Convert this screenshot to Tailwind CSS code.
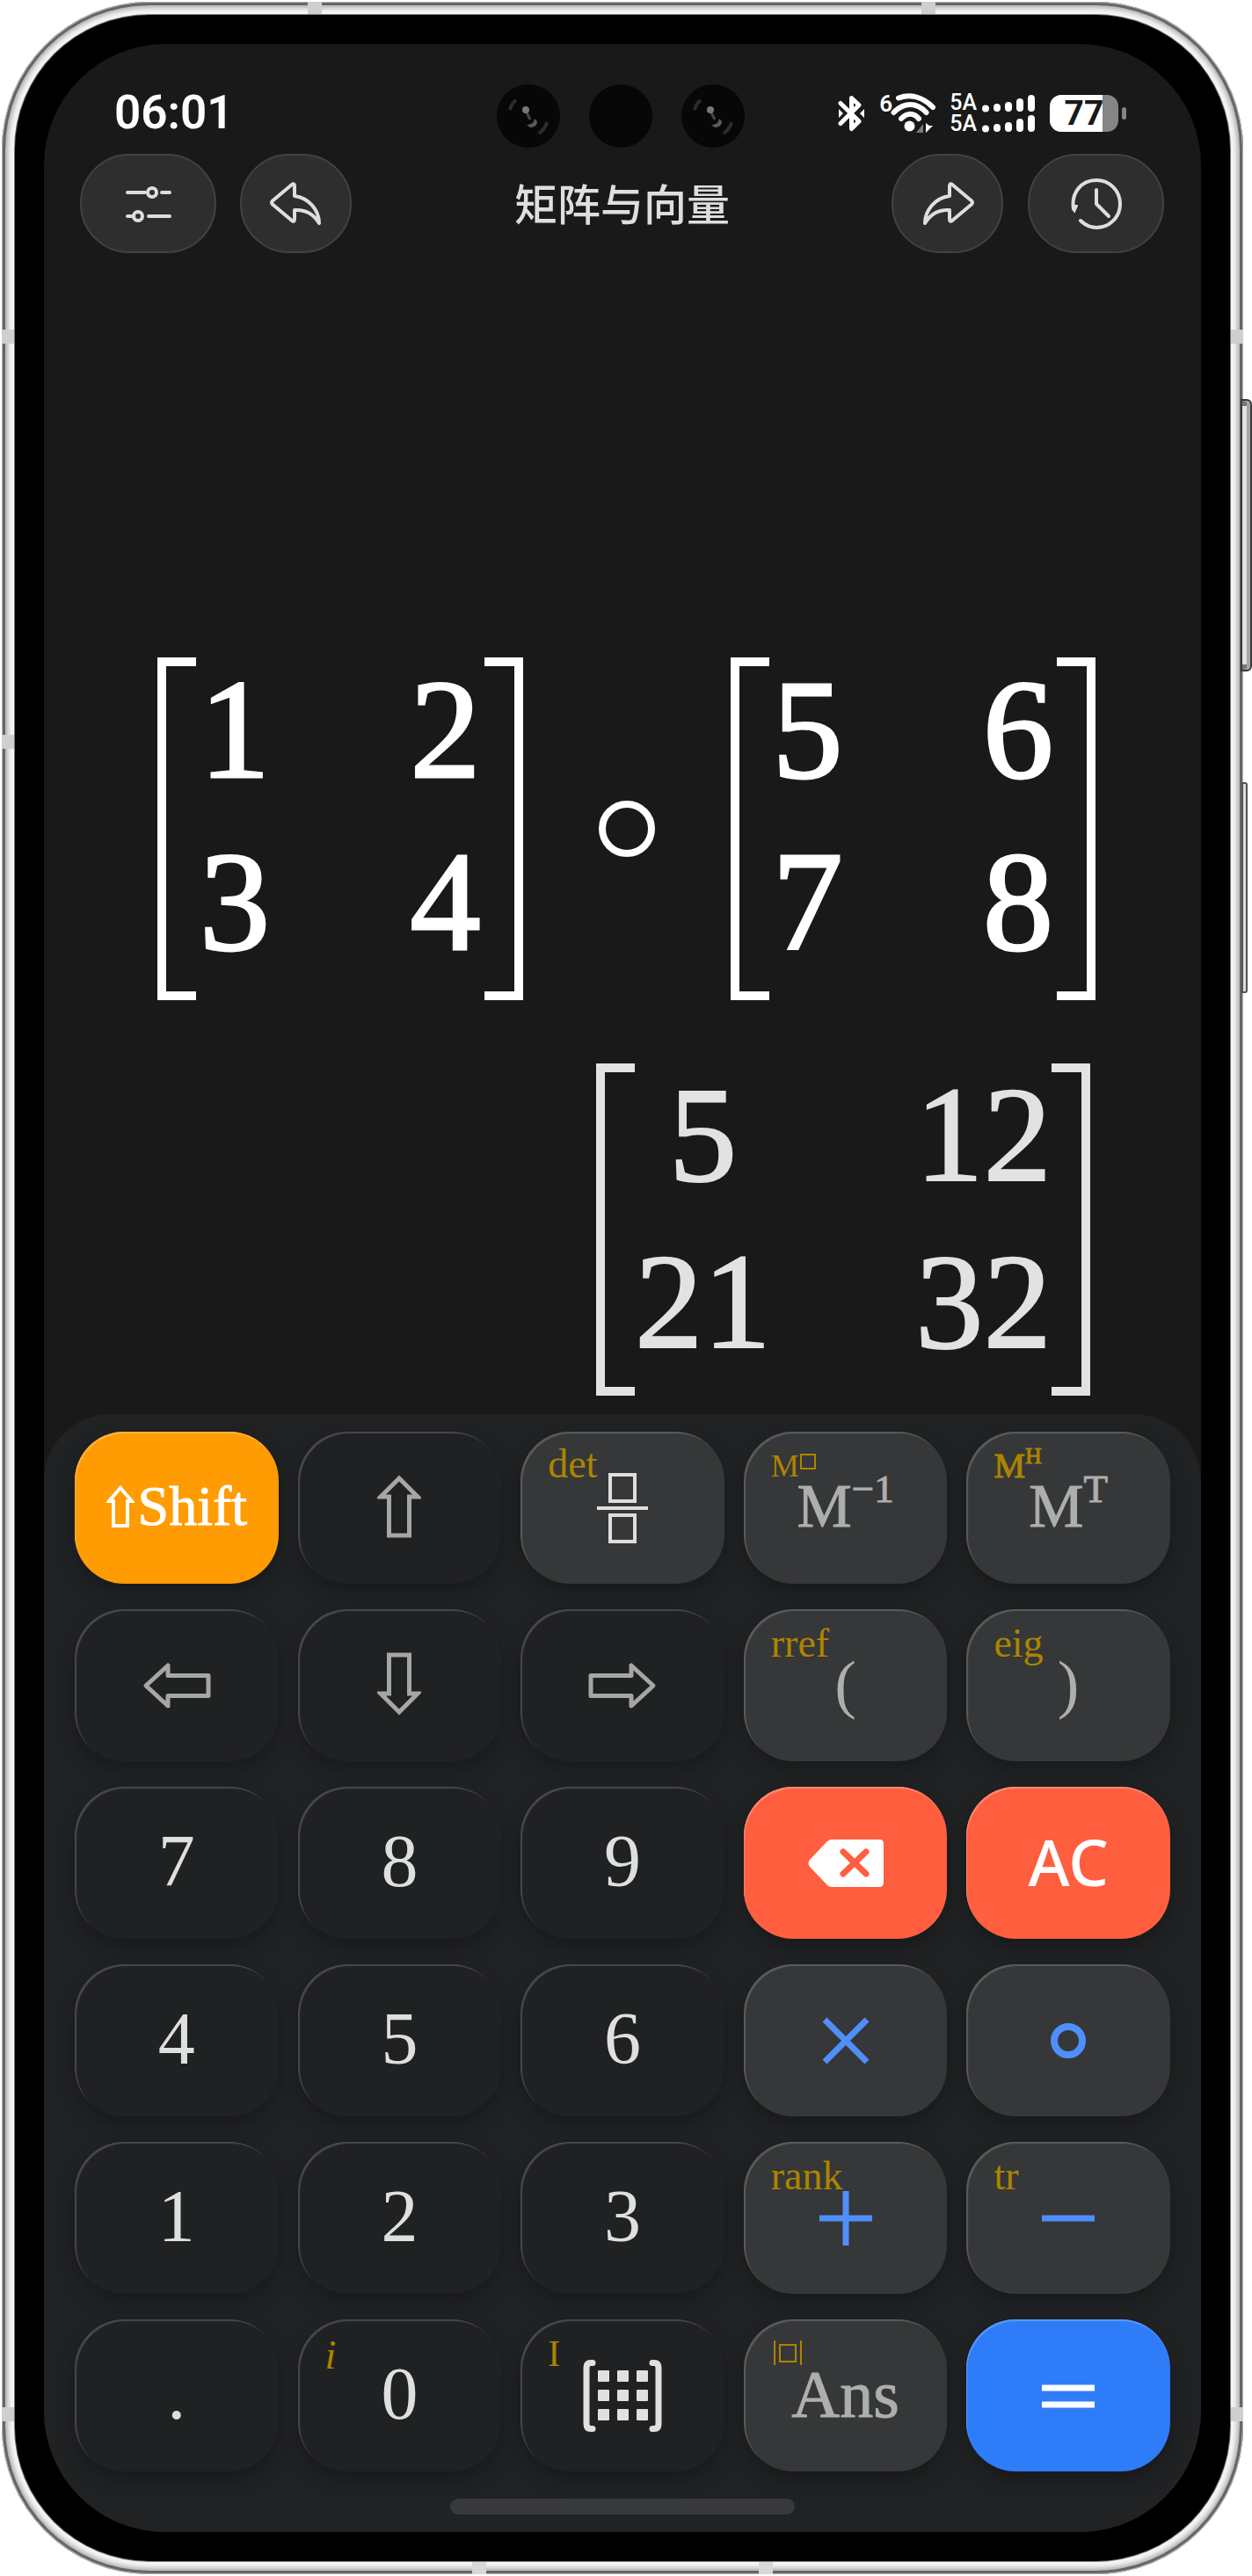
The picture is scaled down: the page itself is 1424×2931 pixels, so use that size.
<!DOCTYPE html>
<html lang="zh-CN">
<head>
    <meta charset="UTF-8">
    <meta name="viewport" content="width=device-width, initial-scale=1.0">
    <title>矩阵与向量</title>
    <script src="https://cdn.jsdelivr.net/npm/@tailwindcss/browser@4"></script>
</head>
<body class="bg-white">
    <!-- Phone frame -->
    <div class="relative ml-[2px] mr-[10px] mt-[2px] rounded-[168px] bg-[#f4f4f4] p-[15px] shadow-[inset_0_0_0_1px_#b5b5b5,inset_0_0_0_4px_#666666,inset_0_0_5px_7px_#b0b0b0]">
        <!-- Antenna bands -->
        <div class="absolute left-[348px] top-0 h-4 w-4 bg-[#cfcfcf]"></div>
        <div class="absolute right-[350px] top-0 h-4 w-4 bg-[#cfcfcf]"></div>
        <div class="absolute bottom-0 left-[535px] h-4 w-4 bg-[#d8d8d8]"></div>
        <div class="absolute bottom-0 right-[535px] h-4 w-4 bg-[#d8d8d8]"></div>
        <div class="absolute left-0 top-[373px] h-4 w-4 bg-[#cfcfcf]"></div>
        <div class="absolute right-0 top-[373px] h-4 w-4 bg-[#cfcfcf]"></div>
        <div class="absolute left-0 top-[834px] h-4 w-4 bg-[#cfcfcf]"></div>
        <div class="absolute bottom-[174px] left-0 h-4 w-4 bg-[#cfcfcf]"></div>
        <div class="absolute bottom-[174px] right-0 h-4 w-4 bg-[#cfcfcf]"></div>
        <!-- Side buttons -->
        <div class="absolute -right-[10px] top-[452px] h-[310px] w-[13px] rounded-r-[6px] border-2 border-[#3a3a3a] bg-[#e2e2e2] shadow-[inset_-4px_0_0_#a5a5a5,inset_0_7px_0_-1px_#777777,inset_0_-7px_0_-1px_#777777]"></div>
        <div class="absolute -right-[5px] top-[888px] h-[240px] w-[7px] rounded-r-[3px] border-2 border-[#555555] bg-[#dddddd]"></div>

        <div class="relative rounded-[153px] bg-black p-[33px] shadow-[0_0_0_1px_#777777]">
            <main class="overflow-hidden rounded-[138px] bg-[#191919]">
                <!-- Status bar -->
                <div class="grid grid-cols-[1fr_auto_1fr] items-start pt-[46px] pl-[80px] pr-[85px] text-white">
                    <time class="font-[Roboto,sans-serif] text-[53px] leading-[64px] font-semibold">06:01</time>
                    <div class="flex gap-[33px]">
                        <svg class="size-[72px]" viewBox="0 0 72 72" fill="none">
                            <circle cx="36" cy="36" r="36" fill="#070707"/>
                            <path d="M15 29c1-5 3-8 7-11M57 43c-1 5-4 9-9 13" stroke="#2c2c2c" stroke-width="4"/>
                            <path d="M33 30l5 10" stroke="#444" stroke-width="3"/>
                            <circle cx="33" cy="29" r="4" fill="#777"/>
                            <path d="M34 46c5 0 8-2 9-7l3 3c0 5-4 7-8 7z" fill="#5a5a5a"/>
                        </svg>
                        <svg class="size-[72px]" viewBox="0 0 72 72"><circle cx="36" cy="36" r="36" fill="#070707"/></svg>
                        <svg class="size-[72px]" viewBox="0 0 72 72" fill="none">
                            <circle cx="36" cy="36" r="36" fill="#070707"/>
                            <path d="M15 29c1-5 3-8 7-11M57 43c-1 5-4 9-9 13" stroke="#2c2c2c" stroke-width="4"/>
                            <path d="M33 30l5 10" stroke="#444" stroke-width="3"/>
                            <circle cx="33" cy="29" r="4" fill="#777"/>
                            <path d="M34 46c5 0 8-2 9-7l3 3c0 5-4 7-8 7z" fill="#5a5a5a"/>
                        </svg>
                    </div>
                    <div class="flex h-[66px] items-center justify-end font-[Roboto,sans-serif]">
                        <svg class="mr-[16px] h-[44px] w-[31px]" viewBox="0 0 31 44" fill="none">
                            <path d="M3 10.500 24 31 15.500 39.500V4.500L24 12.500 3 33.500" stroke="#fff" stroke-width="5" stroke-linejoin="round" stroke-linecap="round"/>
                            <path d="M1 17l5 5-5 5zM30 17l-5 5 5 5z" fill="#fff"/>
                        </svg>
                        <span class="-mr-[2px] self-start pt-[8px] text-[26px] leading-[28px] font-semibold">6</span>
                        <svg class="mr-[15px] h-[46px] w-[52px]" viewBox="0 0 52 46" fill="none">
                            <path d="M9 5.500c14-5 28-1 39 10.500M3.500 22c12-12 26-12 37 0M12 29c7-7 14-7 20 0" stroke="#fff" stroke-width="6" stroke-linecap="round"/>
                            <circle cx="21.500" cy="37.500" r="6" fill="#fff"/>
                            <path d="M37 35v10H29z" fill="#777"/>
                            <path d="M40 34v11l8-8h-4z" fill="#fff"/>
                        </svg>
                        <div class="mr-[6px] flex flex-col text-[25px] leading-[24px] font-medium">
                            <span>5A</span>
                            <span>5A</span>
                        </div>
                        <svg class="mr-[17px] h-[43px] w-[60px]" viewBox="0 0 60 43" stroke="#fff" stroke-width="8" stroke-linecap="round">
                            <path d="M4 15.500v.1M17 14v1M30 12v3M43 8v7M56 4v11M4 38.500v.1M17 37v1M30 35v3M43 31v7M56 27v11"/>
                        </svg>
                        <div class="flex h-[42px] w-[78px] items-center justify-center rounded-[13px] bg-linear-to-r from-white from-77% to-[#858585] to-77% text-[39px] leading-none font-bold text-[#191919]">77</div>
                        <div class="ml-1 h-[14px] w-[5px] rounded-full bg-[#858585]"></div>
                    </div>
                </div>

                <!-- Toolbar -->
                <header class="mt-[7px] flex items-center pl-[41px] pr-[42px]">
                    <div class="flex flex-1 gap-[27px]">
                        <button type="button" aria-label="设置" class="flex h-[113px] w-[155px] items-center justify-center rounded-[56px] border-2 border-[#424242] bg-[#2e2e2e]">
                            <svg class="h-[48px] w-[54px]" viewBox="0 0 54 48" fill="none" stroke="#dedede" stroke-width="4" stroke-linecap="round">
                                <path d="M3 11h20M42 11h9M3 38h5M27 38h24"/>
                                <circle cx="31" cy="11" r="5"/>
                                <circle cx="15" cy="38" r="5"/>
                            </svg>
                        </button>
                        <button type="button" aria-label="撤销" class="flex h-[113px] w-[127px] items-center justify-center rounded-[56px] border-2 border-[#424242] bg-[#2e2e2e]">
                            <svg class="h-[50px] w-[60px]" viewBox="0 0 60 50" fill="none" stroke="#dedede" stroke-width="4" stroke-linejoin="round">
                                <path d="M25 3 3 21.500q-2 2 0 4L25 44q3 2 3-2V32c14-1 22 5 28 15 0-15-12-29-28-31V5q0-4-3-2z"/>
                            </svg>
                        </button>
                    </div>
                    <h1 class="pb-1 font-['Noto_Sans_CJK_SC',sans-serif] text-[49px] leading-[60px] font-medium text-[#dedede]">矩阵与向量</h1>
                    <div class="flex flex-1 justify-end gap-[28px]">
                        <button type="button" aria-label="重做" class="flex h-[113px] w-[127px] items-center justify-center rounded-[56px] border-2 border-[#424242] bg-[#2e2e2e]">
                            <svg class="h-[50px] w-[60px]" viewBox="0 0 60 50" fill="none" stroke="#dedede" stroke-width="4" stroke-linejoin="round">
                                <path d="M35 3 57 21.500q2 2 0 4L35 44q-3 2-3-2V32C18 31 10 37 4 47 4 32 16 18 32 16V5q0-4 3-2z"/>
                            </svg>
                        </button>
                        <button type="button" aria-label="历史" class="flex h-[113px] w-[155px] items-center justify-center rounded-[56px] border-2 border-[#424242] bg-[#2e2e2e]">
                            <svg class="h-[60px] w-[60px]" viewBox="0 0 60 60" fill="none" stroke="#dedede" stroke-width="4" stroke-linecap="round" stroke-linejoin="round">
                                <path d="M4 36C1 17 13 3 30 3c15 0 27 12 27 27S45 57 30 57c-7 0-13-3-18-8"/>
                                <path d="M30 14v16l14 14"/>
                                <path d="M3 32h5l-3 7z" fill="#dedede" stroke-width="2"/>
                            </svg>
                        </button>
                    </div>
                </header>

                <!-- Display -->
                <section class="flex flex-col items-end pt-[460px] pb-[21px] font-['Liberation_Serif',serif]">
                    <div class="grid w-full grid-cols-[1fr_auto_1fr] items-center gap-[86px] pl-[129px] pr-[120px] text-[160px] leading-[164px] text-white [-webkit-text-stroke:3px_#ffffff]">
                        <div class="flex h-[390px]">
                            <div class="w-[44px] border-y-[10px] border-l-[10px] border-white"></div>
                            <div class="flex flex-1 justify-between px-1 text-center">
                                <div class="flex flex-col gap-8"><span>1</span><span>3</span></div>
                                <div class="flex flex-col gap-8"><span>2</span><span>4</span></div>
                            </div>
                            <div class="w-[44px] border-y-[10px] border-r-[10px] border-white"></div>
                        </div>
                        <div class="size-16 rounded-full border-8 border-white"></div>
                        <div class="flex h-[390px]">
                            <div class="w-[44px] border-y-[10px] border-l-[10px] border-white"></div>
                            <div class="flex flex-1 justify-between px-1 text-center">
                                <div class="flex flex-col gap-8"><span>5</span><span>7</span></div>
                                <div class="flex flex-col gap-8"><span>6</span><span>8</span></div>
                            </div>
                            <div class="w-[44px] border-y-[10px] border-r-[10px] border-white"></div>
                        </div>
                    </div>
                    <output class="mt-[72px] mr-[126px] flex h-[378px] w-[562px] text-[155px] leading-[162px] text-[#e2e2e2] [-webkit-text-stroke:2px_#e2e2e2]">
                        <span class="w-[44px] border-y-[10px] border-l-[10px] border-[#e2e2e2]"></span>
                        <span class="flex flex-1 justify-between text-center">
                            <span class="flex flex-col gap-7"><span>5</span><span>21</span></span>
                            <span class="flex flex-col gap-7"><span>12</span><span>32</span></span>
                        </span>
                        <span class="w-[44px] border-y-[10px] border-r-[10px] border-[#e2e2e2]"></span>
                    </output>
                </section>

                <!-- Keypad -->
                <section class="rounded-t-[76px] bg-[#202224] px-[35px] pt-[20px] pb-[20px] font-['Liberation_Serif',serif]">
                    <div class="grid grid-cols-5 gap-x-[22px] gap-y-[29px]">
                        <button type="button" class="flex h-[173px] items-center justify-center gap-1 rounded-[56px] bg-[#ff9c03] pb-1 text-[64px] leading-none text-white shadow-[inset_1px_2px_1px_#ffb443,0_10px_22px_#00000044] [-webkit-text-stroke:1px_#ffffff]">
                            <svg class="h-[48px] w-[32px]" viewBox="0 0 32 48" fill="none" stroke="#fff" stroke-width="4"><path d="M16 3 29 18H24V46H8V18H3z"/></svg>
                            <span>Shift</span>
                        </button>
                        <button type="button" aria-label="上" class="flex h-[173px] items-center justify-center rounded-[56px] bg-[#202123] pb-1 shadow-[inset_2px_2px_1px_#48494b,0_10px_22px_#00000044]">
                            <svg class="h-[72px] w-[50px]" viewBox="0 0 50 72" fill="none" stroke="#a5a6a6" stroke-width="5"><path d="M25 4 46 25H36.500V69H13.500V25H4z"/></svg>
                        </button>
                        <button type="button" aria-label="分数 det" class="relative flex h-[173px] items-center justify-center rounded-[56px] bg-[#363738] shadow-[inset_2px_2px_1px_#5a5b5c,0_10px_22px_#00000044]">
                            <span class="absolute left-[31px] top-[14px] text-[46px] leading-[46px] text-[#ad8400]">det</span>
                            <svg class="h-[80px] w-[60px]" viewBox="0 0 60 80" fill="none" stroke="#dedede" stroke-width="4"><path d="M16 2H44V32H16zM16 48H44V78H16zM1 40H59"/></svg>
                        </button>
                        <button type="button" class="relative flex h-[173px] items-center justify-center rounded-[56px] bg-[#363738] pb-1 text-[70px] leading-none text-[#adaeae] shadow-[inset_2px_2px_1px_#5a5b5c,0_10px_22px_#00000044]">
                            <span class="absolute left-[31px] top-[16px] flex text-[36px] leading-[46px] text-[#ad8400]">M<svg class="mt-[8px] h-[20px] w-[20px]" viewBox="0 0 20 20" fill="none" stroke="#ad8400" stroke-width="2"><path d="M2 2H18V18H2z"/></svg></span>
                            <span class="[-webkit-text-stroke:1px_#adaeae]">M<sup class="-top-7 text-[45px]">−1</sup></span>
                        </button>
                        <button type="button" class="relative flex h-[173px] items-center justify-center rounded-[56px] bg-[#363738] pb-1 text-[70px] leading-none text-[#adaeae] shadow-[inset_2px_2px_1px_#5a5b5c,0_10px_22px_#00000044]">
                            <span class="absolute left-[31px] top-[16px] text-[40px] leading-[46px] text-[#ad8400] [-webkit-text-stroke:1px_#ad8400]">M<sup class="-top-4 text-[26px]">H</sup></span>
                            <span class="[-webkit-text-stroke:1px_#adaeae]">M<sup class="-top-7 text-[45px]">T</sup></span>
                        </button>

                        <button type="button" aria-label="左" class="flex h-[173px] items-center justify-center rounded-[56px] bg-[#202123] shadow-[inset_2px_2px_1px_#48494b,0_10px_22px_#00000044]">
                            <svg class="h-[54px] w-[78px]" viewBox="0 0 78 54" fill="none" stroke="#a5a6a6" stroke-width="5" stroke-linejoin="round"><path d="M4 27 29 4V15.500H75V38.500H29V50z"/></svg>
                        </button>
                        <button type="button" aria-label="下" class="flex h-[173px] items-center justify-center rounded-[56px] bg-[#202123] pb-1 shadow-[inset_2px_2px_1px_#48494b,0_10px_22px_#00000044]">
                            <svg class="h-[72px] w-[50px]" viewBox="0 0 50 72" fill="none" stroke="#a5a6a6" stroke-width="5"><path d="M25 68 46 47H36.500V3H13.500V47H4z"/></svg>
                        </button>
                        <button type="button" aria-label="右" class="flex h-[173px] items-center justify-center rounded-[56px] bg-[#202123] shadow-[inset_2px_2px_1px_#48494b,0_10px_22px_#00000044]">
                            <svg class="h-[54px] w-[78px]" viewBox="0 0 78 54" fill="none" stroke="#a5a6a6" stroke-width="5" stroke-linejoin="round"><path d="M74 27 49 4V15.500H3V38.500H49V50z"/></svg>
                        </button>
                        <button type="button" class="relative flex h-[173px] items-center justify-center rounded-[56px] bg-[#363738] pb-1 text-[74px] leading-none text-[#adaeae] shadow-[inset_2px_2px_1px_#5a5b5c,0_10px_22px_#00000044]">
                            <span class="absolute left-[31px] top-[16px] text-[46px] leading-[46px] text-[#ad8400]">rref</span>
                            <span>(</span>
                        </button>
                        <button type="button" class="relative flex h-[173px] items-center justify-center rounded-[56px] bg-[#363738] pb-1 text-[74px] leading-none text-[#adaeae] shadow-[inset_2px_2px_1px_#5a5b5c,0_10px_22px_#00000044]">
                            <span class="absolute left-[31px] top-[16px] text-[46px] leading-[46px] text-[#ad8400]">eig</span>
                            <span>)</span>
                        </button>

                        <button type="button" class="h-[173px] rounded-[56px] bg-[#202123] pb-1 text-[84px] leading-none text-[#dedfdf] shadow-[inset_2px_2px_1px_#48494b,0_10px_22px_#00000044]">7</button>
                        <button type="button" class="h-[173px] rounded-[56px] bg-[#202123] pb-1 text-[84px] leading-none text-[#dedfdf] shadow-[inset_2px_2px_1px_#48494b,0_10px_22px_#00000044]">8</button>
                        <button type="button" class="h-[173px] rounded-[56px] bg-[#202123] pb-1 text-[84px] leading-none text-[#dedfdf] shadow-[inset_2px_2px_1px_#48494b,0_10px_22px_#00000044]">9</button>
                        <button type="button" aria-label="退格" class="flex h-[173px] items-center justify-center rounded-[56px] bg-[#ff5e3f] shadow-[inset_1px_2px_1px_#ff8a74,0_10px_22px_#00000044]">
                            <svg class="h-[54px] w-[86px]" viewBox="0 0 86 54">
                                <path d="M27 0H81q5 0 5 5V49q0 5-5 5H27q-3 0-5-2L2 31q-3-4 0-8L22 2q2-2 5-2z" fill="#fff"/>
                                <path d="M40 14 66 39M66 14 40 39" stroke="#ff5e3f" stroke-width="7" stroke-linecap="round"/>
                            </svg>
                        </button>
                        <button type="button" class="h-[173px] rounded-[56px] bg-[#ff5e3f] pb-1 font-['Noto_Sans',sans-serif] text-[72px] leading-none font-medium text-white shadow-[inset_1px_2px_1px_#ff8a74,0_10px_22px_#00000044]">AC</button>

                        <button type="button" class="h-[173px] rounded-[56px] bg-[#202123] pb-1 text-[84px] leading-none text-[#dedfdf] shadow-[inset_2px_2px_1px_#48494b,0_10px_22px_#00000044]">4</button>
                        <button type="button" class="h-[173px] rounded-[56px] bg-[#202123] pb-1 text-[84px] leading-none text-[#dedfdf] shadow-[inset_2px_2px_1px_#48494b,0_10px_22px_#00000044]">5</button>
                        <button type="button" class="h-[173px] rounded-[56px] bg-[#202123] pb-1 text-[84px] leading-none text-[#dedfdf] shadow-[inset_2px_2px_1px_#48494b,0_10px_22px_#00000044]">6</button>
                        <button type="button" aria-label="乘" class="flex h-[173px] items-center justify-center rounded-[56px] bg-[#363738] shadow-[inset_2px_2px_1px_#5a5b5c,0_10px_22px_#00000044]">
                            <svg class="h-[54px] w-[54px]" viewBox="0 0 54 54" stroke="#4f8ffb" stroke-width="7"><path d="M3 3 51 51M51 3 3 51"/></svg>
                        </button>
                        <button type="button" aria-label="哈达玛积" class="flex h-[173px] items-center justify-center rounded-[56px] bg-[#363738] shadow-[inset_2px_2px_1px_#5a5b5c,0_10px_22px_#00000044]">
                            <svg class="h-[40px] w-[40px]" viewBox="0 0 40 40" fill="none" stroke="#4f8ffb" stroke-width="8"><circle cx="20" cy="20" r="16"/></svg>
                        </button>

                        <button type="button" class="h-[173px] rounded-[56px] bg-[#202123] pb-1 text-[84px] leading-none text-[#dedfdf] shadow-[inset_2px_2px_1px_#48494b,0_10px_22px_#00000044]">1</button>
                        <button type="button" class="h-[173px] rounded-[56px] bg-[#202123] pb-1 text-[84px] leading-none text-[#dedfdf] shadow-[inset_2px_2px_1px_#48494b,0_10px_22px_#00000044]">2</button>
                        <button type="button" class="h-[173px] rounded-[56px] bg-[#202123] pb-1 text-[84px] leading-none text-[#dedfdf] shadow-[inset_2px_2px_1px_#48494b,0_10px_22px_#00000044]">3</button>
                        <button type="button" aria-label="加 rank" class="relative flex h-[173px] items-center justify-center rounded-[56px] bg-[#363738] shadow-[inset_2px_2px_1px_#5a5b5c,0_10px_22px_#00000044]">
                            <span class="absolute left-[31px] top-[16px] text-[46px] leading-[46px] text-[#ad8400]">rank</span>
                            <svg class="h-[62px] w-[62px]" viewBox="0 0 62 62" stroke="#4f8ffb" stroke-width="7"><path d="M31 0V62M1 31H61"/></svg>
                        </button>
                        <button type="button" aria-label="减 tr" class="relative flex h-[173px] items-center justify-center rounded-[56px] bg-[#363738] shadow-[inset_2px_2px_1px_#5a5b5c,0_10px_22px_#00000044]">
                            <span class="absolute left-[31px] top-[16px] text-[46px] leading-[46px] text-[#ad8400]">tr</span>
                            <svg class="h-[62px] w-[62px]" viewBox="0 0 62 62" stroke="#4f8ffb" stroke-width="7"><path d="M1 31H61"/></svg>
                        </button>

                        <button type="button" class="h-[173px] rounded-[56px] bg-[#202123] pb-1 text-[84px] leading-none text-[#dedfdf] shadow-[inset_2px_2px_1px_#48494b,0_10px_22px_#00000044]">.</button>
                        <button type="button" class="relative flex h-[173px] items-center justify-center rounded-[56px] bg-[#202123] pb-1 text-[84px] leading-none text-[#dedfdf] shadow-[inset_2px_2px_1px_#48494b,0_10px_22px_#00000044]">
                            <span class="absolute left-[31px] top-[18px] text-[46px] leading-[46px] text-[#ad8400] italic">i</span>
                            <span>0</span>
                        </button>
                        <button type="button" aria-label="矩阵 I" class="relative flex h-[173px] items-center justify-center rounded-[56px] bg-[#202123] shadow-[inset_2px_2px_1px_#48494b,0_10px_22px_#00000044]">
                            <span class="absolute left-[31px] top-[16px] text-[42px] leading-[46px] text-[#ad8400]">I</span>
                            <svg class="h-[82px] w-[90px]" viewBox="0 0 90 82">
                                <path d="M11 3.500H9Q4 3.500 4 9V73Q4 78.500 9 78.500H11M79 3.500H81Q86 3.500 86 9V73Q86 78.500 81 78.500H79" fill="none" stroke="#e0e0e0" stroke-width="7" stroke-linecap="round"/>
                                <g fill="#e0e0e0">
                                    <rect x="17" y="12" width="13" height="13" rx="1"/><rect x="39" y="12" width="13" height="13" rx="1"/><rect x="61" y="12" width="13" height="13" rx="1"/>
                                    <rect x="17" y="34" width="13" height="13" rx="1"/><rect x="39" y="34" width="13" height="13" rx="1"/><rect x="61" y="34" width="13" height="13" rx="1"/>
                                    <rect x="17" y="56" width="13" height="13" rx="1"/><rect x="39" y="56" width="13" height="13" rx="1"/><rect x="61" y="56" width="13" height="13" rx="1"/>
                                </g>
                            </svg>
                        </button>
                        <button type="button" class="relative flex h-[173px] items-center justify-center rounded-[56px] bg-[#363738] pb-1 text-[76px] leading-none text-[#adaeae] shadow-[inset_2px_2px_1px_#5a5b5c,0_10px_22px_#00000044] [-webkit-text-stroke:1px_#adaeae]">
                            <svg class="absolute left-[33px] top-[24px] h-[28px] w-[34px]" viewBox="0 0 34 28" fill="none" stroke="#ad8400" stroke-width="2"><path d="M2 0V28M32 0V28M8 5H26V24H8z"/></svg>
                            <span>Ans</span>
                        </button>
                        <button type="button" aria-label="等于" class="flex h-[173px] items-center justify-center rounded-[56px] bg-[#2f7cf9] shadow-[inset_1px_2px_1px_#5c99fb,0_10px_22px_#00000044]">
                            <svg class="h-[30px] w-[60px]" viewBox="0 0 60 30" stroke="#fff" stroke-width="7"><path d="M0 6H60M0 25H60"/></svg>
                        </button>
                    </div>
                    <div class="mx-auto mt-[31px] h-[18px] w-[392px] rounded-full bg-[#38393b]"></div>
                </section>
            </main>
        </div>
    </div>
</body>
</html>
